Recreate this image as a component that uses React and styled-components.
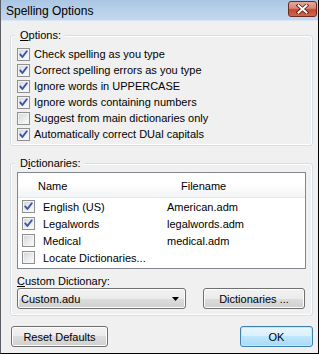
import React from 'react';
import styled, { createGlobalStyle } from 'styled-components';

const GlobalStyle = createGlobalStyle`
    html, body {
        margin: 0;
        padding: 0;
        overflow: hidden;
        background: #f0f0f0;
    }
`;

const Window = styled.div`
    width: 319px;
    height: 354px;
    box-sizing: border-box;
    display: flex;
    flex-direction: column;
    background: #f0f0f0;
    border-left: 1px solid #5a5f66;
    border-right: 1px solid #000;
    border-bottom: 1px solid #000;
    font-family: "Liberation Sans", Arial, sans-serif;
    font-size: 11px;
    color: #000;
`;

const TitleBar = styled.div`
    height: 20px;
    flex: none;
    display: flex;
    align-items: center;
    justify-content: space-between;
    padding: 0 1px 0 5px;
    background: linear-gradient(#abc6e4, #c3d8ee);
    border-bottom: 1px solid #dbe6f2;
`;

const Title = styled.span`
    font-size: 12px;
    color: #000;
    padding-top: 1px;
`;

const CloseButton = styled.div`
    width: 27px;
    height: 14px;
    margin-top: -3px;
    border: 1px solid #6b2a22;
    border-radius: 3px;
    display: flex;
    align-items: center;
    justify-content: center;
    background: linear-gradient(#e8a89a 0%, #d98370 45%, #c5472f 55%, #d0674c 100%);
`;

const Content = styled.div`
    flex: 1;
    display: flex;
    flex-direction: column;
    padding: 7px 5px 0 9px;
`;

const Group = styled.fieldset`
    margin: ${p => p.$top || 0}px 0 0 0;
    min-width: 0;
    padding: ${p => p.$pad};
    border: 1px solid #d5dfe5;
    border-radius: 3px;
    box-shadow: inset 0 0 0 1px #fff;
`;

const Legend = styled.legend`
    padding: 0 4px 0 5px;
    margin-left: -2px;
    line-height: 14px;
    background: #f0f0f0;
`;

const OptionRow = styled.label`
    height: 16px;
    display: flex;
    align-items: center;
    gap: 4px;
    line-height: 14px;
`;

const Box = styled.span`
    width: 13px;
    height: 13px;
    flex: none;
    box-sizing: border-box;
    border: 1px solid #8e8f8f;
    background: linear-gradient(135deg, #d2d4d6 0%, #eceeef 60%, #fbfbfb 100%);
    box-shadow: inset 0 0 0 1px #f4f4f4;
    display: flex;
    align-items: center;
    justify-content: center;
`;

const Check = ({ checked }) => (
    <Box>
        {checked && (
            <svg width="11" height="11" viewBox="0 0 11 11">
                <path d="M2.2 5.4 L4.4 8 L8.8 2.2" fill="none" stroke="#3756a4" strokeWidth="1.9" strokeLinecap="round" strokeLinejoin="round" />
            </svg>
        )}
    </Box>
);

const ListBox = styled.div`
    height: 97px;
    box-sizing: border-box;
    border: 1px solid #828790;
    background: #fff;
    display: flex;
    flex-direction: column;
`;

const ListHeader = styled.div`
    height: 24px;
    flex: none;
    display: grid;
    grid-template-columns: 146px 1fr;
    align-items: center;
    border-bottom: 1px solid #e4e6ea;
    background: linear-gradient(#ffffff 0%, #ffffff 45%, #f2f3f5 100%);
`;

const HeaderCell = styled.span`
    padding-left: ${p => p.$indent}px;
    padding-top: 1px;
`;

const ListRow = styled.div`
    height: 17px;
    display: grid;
    grid-template-columns: 146px 1fr;
    align-items: center;
`;

const NameCell = styled.span`
    display: flex;
    align-items: center;
    gap: 8px;
    padding-left: 4px;
`;

const FileCell = styled.span`
    padding-left: 3px;
`;

const Label = styled.div`
    margin-top: 5px;
    line-height: 14px;
`;

const ComboRow = styled.div`
    display: flex;
    justify-content: space-between;
    align-items: center;
    padding-right: 1px;
`;

const Combo = styled.div`
    width: 169px;
    height: 21px;
    box-sizing: border-box;
    border: 1px solid #707070;
    border-radius: 3px;
    display: flex;
    align-items: center;
    justify-content: space-between;
    padding: 0 6px 0 3px;
    background: linear-gradient(#f2f2f2 0%, #ebebeb 50%, #dddddd 50%, #cfcfcf 100%);
    box-shadow: inset 0 0 0 1px #fcfcfc;
`;

const Button = styled.button`
    width: ${p => p.$w}px;
    height: 21px;
    box-sizing: border-box;
    padding: 0;
    font-family: inherit;
    font-size: 11px;
    color: #000;
    border: 1px solid ${p => (p.$default ? '#3c7fb1' : '#707070')};
    border-radius: 3px;
    background: ${p => p.$default
        ? 'linear-gradient(#eaf6fd 0%, #d9f0fc 50%, #bee6fd 50%, #a7d9f5 100%)'
        : 'linear-gradient(#f2f2f2 0%, #ebebeb 50%, #dddddd 50%, #cfcfcf 100%)'};
    box-shadow: inset 0 0 0 1px ${p => (p.$default ? '#c2e8fb' : '#fcfcfc')};
`;

const Footer = styled.div`
    margin-top: 10px;
    display: flex;
    justify-content: space-between;
    padding-left: 1px;
`;

const options = [
    ['Check spelling as you type', true],
    ['Correct spelling errors as you type', true],
    ['Ignore words in UPPERCASE', true],
    ['Ignore words containing numbers', true],
    ['Suggest from main dictionaries only', false],
    ['Automatically correct DUal capitals', true],
];

const dictionaries = [
    ['English (US)', 'American.adm', true],
    ['Legalwords', 'legalwords.adm', true],
    ['Medical', 'medical.adm', false],
    ['Locate Dictionaries...', '', false],
];

export default function App() {
    return (
        <>
            <GlobalStyle />
            <Window>
                <TitleBar>
                    <Title>Spelling Options</Title>
                    <CloseButton>
                        <svg width="13" height="10" viewBox="0 0 13 10">
                            <path d="M2.5 1.5 L10.5 8.5 M10.5 1.5 L2.5 8.5" stroke="#4a1a14" strokeWidth="3.6" strokeLinecap="square" />
                            <path d="M2.5 1.5 L10.5 8.5 M10.5 1.5 L2.5 8.5" stroke="#fff" strokeWidth="2" strokeLinecap="square" />
                        </svg>
                    </CloseButton>
                </TitleBar>
                <Content>
                    <Group $pad="4px 6px 3px 6px">
                        <Legend><u>O</u>ptions:</Legend>
                        {options.map(([text, on]) => (
                            <OptionRow key={text}>
                                <Check checked={on} />
                                {text}
                            </OptionRow>
                        ))}
                    </Group>
                    <Group $top={10} $pad="2px 6px 6px 6px">
                        <Legend>D<u>i</u>ctionaries:</Legend>
                        <ListBox>
                            <ListHeader>
                                <HeaderCell $indent={20}>Name</HeaderCell>
                                <HeaderCell $indent={17}>Filename</HeaderCell>
                            </ListHeader>
                            {dictionaries.map(([name, file, on]) => (
                                <ListRow key={name}>
                                    <NameCell>
                                        <Check checked={on} />
                                        {name}
                                    </NameCell>
                                    <FileCell>{file}</FileCell>
                                </ListRow>
                            ))}
                        </ListBox>
                        <Label><u>C</u>ustom Dictionary:</Label>
                        <ComboRow>
                            <Combo>
                                <span>Custom.adu</span>
                                <svg width="7" height="4" viewBox="0 0 7 4">
                                    <path d="M0 0 H7 L3.5 4 Z" fill="#000" />
                                </svg>
                            </Combo>
                            <Button $w={102}>Dictionaries ...</Button>
                        </ComboRow>
                    </Group>
                    <Footer>
                        <Button $w={97}>Reset Defaults</Button>
                        <Button $w={73} $default>OK</Button>
                    </Footer>
                </Content>
            </Window>
        </>
    );
}
